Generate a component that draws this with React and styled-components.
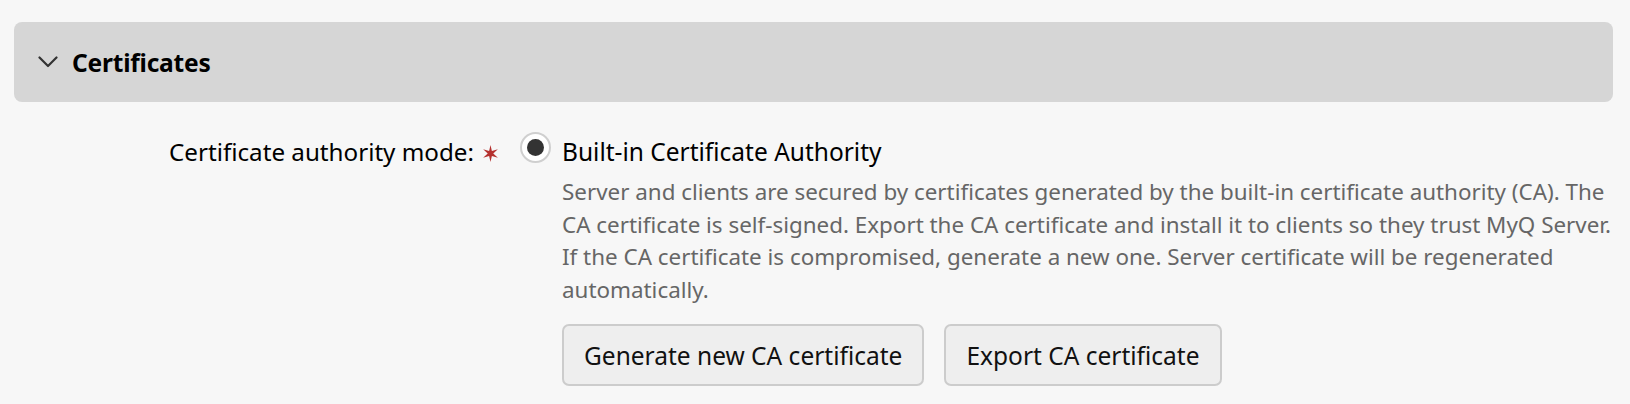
import React from "react";
import styled, { createGlobalStyle } from "styled-components";

const Global = createGlobalStyle`
  html, body { margin: 0; padding: 0; background: #f7f7f7; }
  body { font-family: "Noto Sans", "Open Sans", sans-serif; color: #000; }
`;

const Page = styled.div`
  padding: 22px 17px 0 14px;
`;

const SectionHeader = styled.div`
  height: 80px;
  background: #d6d6d6;
  border-radius: 8px;
  display: flex;
  align-items: center;
  gap: 14px;
  padding-left: 24px;
  box-sizing: border-box;
`;

const SectionTitle = styled.h2`
  margin: 0;
  font-size: 24.5px;
  font-weight: 700;
  letter-spacing: -0.2px;
`;

const FormRow = styled.div`
  display: flex;
  align-items: flex-start;
  padding-top: 30px;
`;

const LabelCell = styled.div`
  width: 506px;
  flex-shrink: 0;
  display: flex;
  justify-content: flex-end;
  align-items: center;
  gap: 8px;
  padding-right: 21px;
  box-sizing: border-box;
  height: 30px;
  margin-top: 5px;
`;

const Label = styled.span`
  font-size: 24.2px;
  line-height: 30px;
  white-space: nowrap;
`;

const Required = styled.svg`
  width: 17px;
  height: 17px;
  flex-shrink: 0;
  margin-top: 2px;
`;

const Radio = styled.span`
  width: 31px;
  height: 31px;
  box-sizing: border-box;
  border-radius: 50%;
  border: 2px solid #cfcfcf;
  background: #fff;
  display: flex;
  align-items: center;
  justify-content: center;
  flex-shrink: 0;
  &::after {
    content: "";
    width: 17px;
    height: 17px;
    border-radius: 50%;
    background: #333;
  }
`;

const OptionBody = styled.div`
  flex: 1;
  min-width: 0;
  margin-left: 7px;
  padding-left: 4px;
  display: flex;
  flex-direction: column;
`;

const OptionTitle = styled.div`
  font-size: 24.5px;
  line-height: 30px;
  margin-top: 5px;
`;

const OptionDesc = styled.p`
  margin: 9px 0 0;
  font-size: 22.4px;
  line-height: 32.5px;
  color: #666;
`;

const Buttons = styled.div`
  display: flex;
  gap: 20px;
  margin-top: 18px;
`;

const Button = styled.button`
  height: 62px;
  padding: 0 20px;
  font-family: inherit;
  font-size: 24.5px;
  color: #111;
  background: #eeeeee;
  border: 2px solid #cccccc;
  border-radius: 7px;
  white-space: nowrap;
  cursor: pointer;
`;

const Chevron = () => (
  <svg width="20" height="12" viewBox="0 0 20 12" fill="none">
    <path d="M1.5 1.5 L10 10 L18.5 1.5" stroke="#333" strokeWidth="2.2" strokeLinecap="round" strokeLinejoin="round" />
  </svg>
);

const starPoints = (() => {
  const pts = [];
  for (let i = 0; i < 12; i++) {
    const r = i % 2 === 0 ? 8 : 2.6;
    const a = (Math.PI / 6) * i - Math.PI / 2;
    pts.push(`${(8 + r * Math.cos(a)).toFixed(2)},${(8 + r * Math.sin(a)).toFixed(2)}`);
  }
  return pts.join(" ");
})();

export default function App() {
  return (
    <Page>
      <Global />
      <SectionHeader>
        <Chevron />
        <SectionTitle>Certificates</SectionTitle>
      </SectionHeader>
      <FormRow>
        <LabelCell>
          <Label>Certificate authority mode:</Label>
          <Required viewBox="0 0 16 16" aria-label="required">
            <polygon points={starPoints} fill="#b5312f" />
          </Required>
        </LabelCell>
        <Radio />
        <OptionBody>
          <OptionTitle>Built-in Certificate Authority</OptionTitle>
          <OptionDesc>
            Server and clients are secured by certificates generated by the built-in certificate authority (CA). The CA certificate is self-signed. Export the CA certificate and install it to clients so they trust MyQ Server. If the CA certificate is compromised, generate a new one. Server certificate will be regenerated automatically.
          </OptionDesc>
          <Buttons>
            <Button>Generate new CA certificate</Button>
            <Button>Export CA certificate</Button>
          </Buttons>
        </OptionBody>
      </FormRow>
    </Page>
  );
}
